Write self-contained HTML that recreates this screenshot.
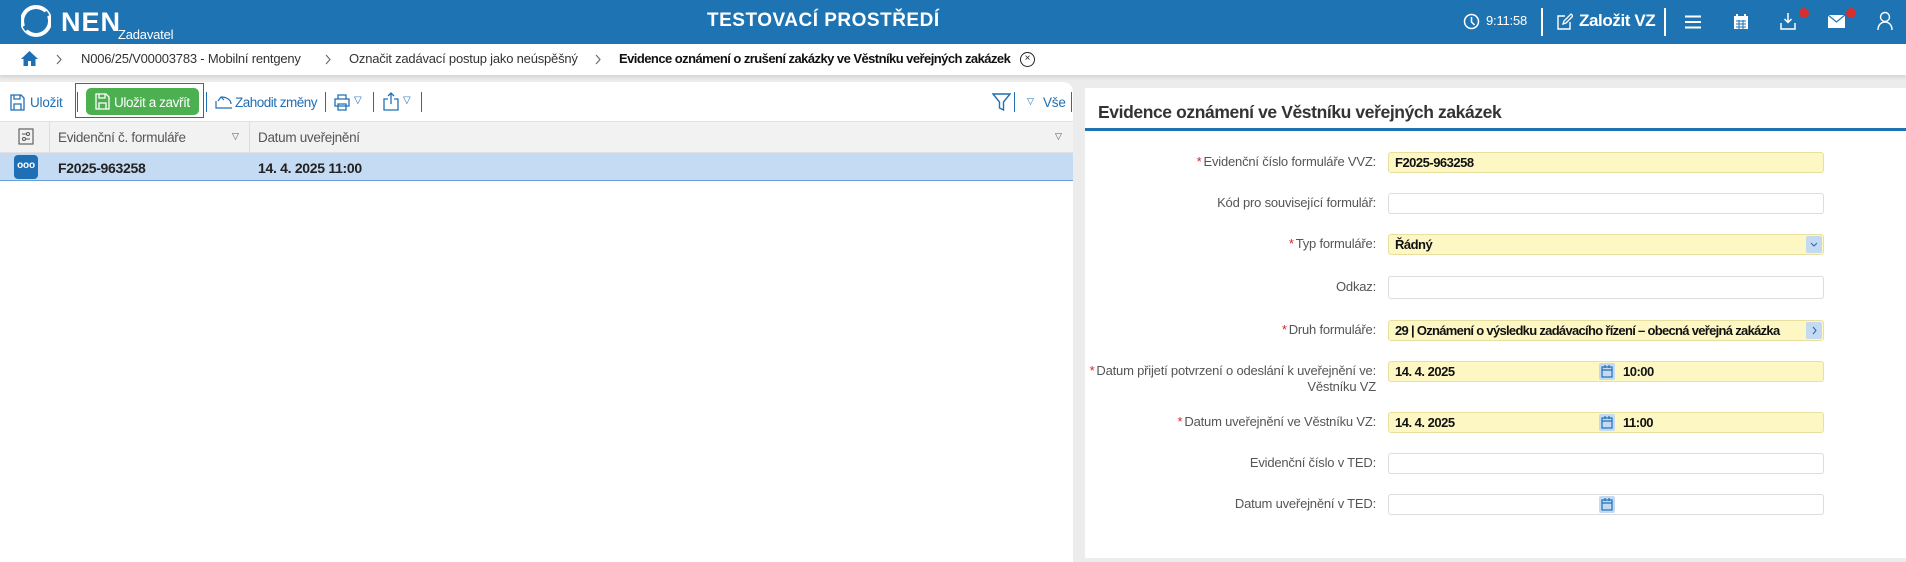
<!DOCTYPE html>
<html><head><meta charset="utf-8"><style>
*{box-sizing:border-box;margin:0;padding:0}
body{width:1906px;height:554px;overflow:hidden;background:#ececec;font-family:"Liberation Sans",sans-serif;font-size:13px;color:#222;position:relative;letter-spacing:-0.2px}
.abs{position:absolute}
#hdr{left:0;top:0;width:1906px;height:44px;background:#1e74b3;color:#fff}
#bc{left:0;top:44px;width:1906px;height:31px;background:#fff;box-shadow:0 2px 4px rgba(0,0,0,.12)}
#lp{left:0;top:82px;width:1073px;height:480px;background:#fff;border-top-right-radius:10px}
#rp{left:1085px;top:88px;width:821px;height:470px;background:#fff}
.blue{color:#1f6fb5}
.sep{position:absolute;width:1px;height:20px;background:#1f6fb5;top:92px}
.lbl{position:absolute;right:530px;text-align:right;color:#555;font-size:13px;line-height:16px}
.lbl b{color:#d22;font-weight:normal;margin-right:2px}
.inp{position:absolute;left:1388px;width:436px;height:21px;border:1px solid #ddd;border-radius:3px;background:#fff;font-weight:bold;font-size:13px;line-height:19px;padding-left:6px;color:#111;letter-spacing:-0.5px;overflow:hidden;white-space:nowrap}
.inp.y{background:#fdf7c3;border-color:#e8e0a0}
.cal{position:absolute;left:210px;top:1px;width:16px;height:17px;background:#c5daf2;border-radius:2px}
</style></head><body>
<div id="hdr" class="abs">
 <svg class="abs" style="left:21px;top:5px" width="30" height="32" viewBox="0 0 30 32"><path d="M15 2a14 14 0 1 0 0.1 0" fill="none" stroke="#fff" stroke-width="4"/><path d="M3 24 L27 8" stroke="#1e74b3" stroke-width="5"/></svg>
 <div class="abs" style="left:61px;top:7px;font-size:27px;font-weight:bold;letter-spacing:1px">NEN</div>
 <div class="abs" style="left:118px;top:27px;font-size:13px">Zadavatel</div>
 <div class="abs" style="left:707px;top:10px;font-size:19px;font-weight:bold;letter-spacing:0.5px">TESTOVACÍ PROSTŘEDÍ</div>
 <svg class="abs" style="left:1463px;top:13px" width="17" height="17" viewBox="0 0 17 17"><circle cx="8.5" cy="8.5" r="7" fill="none" stroke="#fff" stroke-width="1.5"/><path d="M8.5 4v5l3 3" fill="none" stroke="#fff" stroke-width="1.5"/></svg>
 <div class="abs" style="left:1486px;top:13px;font-size:13px">9:11:58</div>
 <div class="abs" style="left:1541px;top:8px;width:2px;height:28px;background:#fff"></div>
 <svg class="abs" style="left:1556px;top:13px" width="17" height="18" viewBox="0 0 17 18"><path d="M9 3H2v13h12V9" fill="none" stroke="#fff" stroke-width="1.4"/><path d="M7 11l1-3 7-7 2 2-7 7z" fill="none" stroke="#fff" stroke-width="1.3"/></svg>
 <div class="abs" style="left:1579px;top:11px;font-size:17px;font-weight:bold;letter-spacing:-0.4px">Založit VZ</div>
 <div class="abs" style="left:1664px;top:8px;width:2px;height:28px;background:#fff"></div>
 <svg class="abs" style="left:1685px;top:15px" width="16" height="14"><path d="M0 1.5h16M0 7h16M0 12.5h16" stroke="#fff" stroke-width="2"/></svg>
 <svg class="abs" style="left:1733px;top:13px" width="16" height="17" viewBox="0 0 16 17"><rect x="1" y="3" width="14" height="13" fill="#fff"/><path d="M4 1v4M12 1v4" stroke="#fff" stroke-width="2"/><path d="M3 8h10M3 11h10M3 14h10M6 7v9M10 7v9" stroke="#1e74b3" stroke-width="1"/></svg>
 <svg class="abs" style="left:1780px;top:12px" width="16" height="18" viewBox="0 0 16 18"><path d="M8 1v9M4.5 7l3.5 3.5L11.5 7" fill="none" stroke="#fff" stroke-width="1.5"/><path d="M1 11v6h14v-6" fill="none" stroke="#fff" stroke-width="1.5"/></svg>
 <div class="abs" style="left:1799px;top:8px;width:10px;height:10px;border-radius:50%;background:#d32f2f"></div>
 <svg class="abs" style="left:1828px;top:15px" width="17" height="13" viewBox="0 0 17 13"><rect width="17" height="13" fill="#fff"/><path d="M0 0l8.5 7L17 0" fill="none" stroke="#1e74b3" stroke-width="1.2"/></svg>
 <div class="abs" style="left:1846px;top:8px;width:10px;height:10px;border-radius:50%;background:#d32f2f"></div>
 <svg class="abs" style="left:1877px;top:11px" width="16" height="20" viewBox="0 0 16 20"><circle cx="8" cy="6" r="4.5" fill="none" stroke="#fff" stroke-width="1.4"/><path d="M1 19c0-5 3-8 7-8s7 3 7 8" fill="none" stroke="#fff" stroke-width="1.4"/></svg>
</div>
<div id="bc" class="abs">
 <svg class="abs" style="left:21px;top:7px" width="17" height="15" viewBox="0 0 17 15"><path d="M8.5 0L0 8h2.5v7h4.5v-5h3v5h4.5V8H17z" fill="#1f6fb5"/></svg>
 <svg class="abs" style="left:56px;top:10px" width="6" height="11"><path d="M1 1l4 4.5L1 10" fill="none" stroke="#666" stroke-width="1.1"/></svg>
 <div class="abs" style="left:81px;top:7px;color:#333">N006/25/V00003783 - Mobilní rentgeny</div>
 <svg class="abs" style="left:325px;top:10px" width="6" height="11"><path d="M1 1l4 4.5L1 10" fill="none" stroke="#666" stroke-width="1.1"/></svg>
 <div class="abs" style="left:349px;top:7px;color:#333">Označit zadávací postup jako neúspěšný</div>
 <svg class="abs" style="left:595px;top:10px" width="6" height="11"><path d="M1 1l4 4.5L1 10" fill="none" stroke="#666" stroke-width="1.1"/></svg>
 <div class="abs" style="left:619px;top:7px;color:#111;font-weight:bold;letter-spacing:-0.55px">Evidence oznámení o zrušení zakázky ve Věstníku veřejných zakázek</div>
 <div class="abs" style="left:1020px;top:8px;width:15px;height:15px;border:1.3px solid #222;border-radius:50%;font-size:10px;line-height:12px;text-align:center">×</div>
</div>
<div id="lp" class="abs"></div>
<div id="rp" class="abs"></div>
<!-- toolbar -->
<svg class="abs" style="left:10px;top:94px" width="15" height="17" viewBox="0 0 15 17"><path d="M1 1h10l3 3v12H1z M4 1v4h6V1 M4 16v-6h7v6" fill="none" stroke="#1f6fb5" stroke-width="1.3"/></svg>
<div class="abs blue" style="left:30px;top:95px;font-size:13.5px">Uložit</div>
<div class="sep" style="left:77px"></div>
<div class="abs" style="left:75px;top:83px;width:129px;height:35px;border:1px solid #e0262b"></div>
<div class="abs" style="left:86px;top:88px;width:113px;height:27px;background:#4caf50;border-radius:5px"></div>
<svg class="abs" style="left:95px;top:93px" width="15" height="17" viewBox="0 0 15 17"><path d="M1 1h10l3 3v12H1z M4 1v4h6V1 M4 16v-6h7v6" fill="none" stroke="#fff" stroke-width="1.3"/></svg>
<div class="abs" style="left:114px;top:95px;font-size:13.5px;color:#fff;letter-spacing:-0.4px">Uložit a zavřít</div>
<div class="sep" style="left:206px"></div>
<svg class="abs" style="left:215px;top:95px" width="18" height="14" viewBox="0 0 18 14"><path d="M3 6l3-4 3 3M6 2c6 0 10 3 10 7M1 6v7h16" fill="none" stroke="#1f6fb5" stroke-width="1.2"/></svg>
<div class="abs blue" style="left:235px;top:95px;font-size:13.5px;letter-spacing:-0.5px">Zahodit změny</div>
<div class="sep" style="left:325px"></div>
<svg class="abs" style="left:334px;top:94px" width="16" height="17" viewBox="0 0 16 17"><path d="M4 5V1h8v4M1 5h14v7H1zM4 10h8v6H4z" fill="none" stroke="#1f6fb5" stroke-width="1.3"/></svg>
<div class="abs blue" style="left:354px;top:95px;font-size:10px">▽</div>
<div class="sep" style="left:373px"></div>
<svg class="abs" style="left:383px;top:92px" width="16" height="19" viewBox="0 0 16 19"><path d="M5 7H1v11h14V7h-4M8 12V1M5 4l3-3 3 3" fill="none" stroke="#1f6fb5" stroke-width="1.3"/></svg>
<div class="abs blue" style="left:403px;top:95px;font-size:10px">▽</div>
<div class="sep" style="left:421px"></div>
<svg class="abs" style="left:992px;top:93px" width="19" height="18" viewBox="0 0 19 18"><path d="M1 1h17l-6.5 8v8l-4-2V9z" fill="none" stroke="#1f6fb5" stroke-width="1.4"/></svg>
<div class="sep" style="left:1014px"></div>
<div class="abs blue" style="left:1027px;top:96px;font-size:9px">▽</div>
<div class="abs blue" style="left:1043px;top:95px;font-size:13.5px">Vše</div>
<div class="sep" style="left:1071px"></div>
<!-- grid -->
<div class="abs" style="left:0;top:121px;width:1073px;height:32px;background:#f2f2f2;border-top:1px solid #e2e2e2;border-bottom:1px solid #e2e2e2"></div>
<div class="abs" style="left:49px;top:121px;width:1px;height:32px;background:#ddd"></div>
<div class="abs" style="left:249px;top:121px;width:1px;height:32px;background:#ddd"></div>
<svg class="abs" style="left:18px;top:128px" width="16" height="17" viewBox="0 0 16 17"><rect x="1" y="1" width="14" height="15" fill="none" stroke="#555" stroke-width="1.1"/><path d="M4 6h8M4 11h8" stroke="#555"/><circle cx="10" cy="6" r="1.5" fill="#fff" stroke="#555"/><circle cx="6" cy="11" r="1.5" fill="#fff" stroke="#555"/></svg>
<div class="abs" style="left:58px;top:130px;color:#555;font-size:13.5px;letter-spacing:-0.3px">Evidenční č. formuláře</div>
<div class="abs" style="left:232px;top:131px;color:#555;font-size:9px">▽</div>
<div class="abs" style="left:258px;top:130px;color:#555;font-size:13.5px;letter-spacing:-0.3px">Datum uveřejnění</div>
<div class="abs" style="left:1055px;top:131px;color:#555;font-size:9px">▽</div>
<div class="abs" style="left:0;top:153px;width:1073px;height:28px;background:#c5daf3;border-bottom:1px solid #6a9fd6"></div>
<div class="abs" style="left:14px;top:155px;width:24px;height:24px;background:#1f6fb5;border-radius:4px;color:#fff;font-size:10px;text-align:center;line-height:22px;font-weight:bold">ooo</div>
<div class="abs" style="left:58px;top:160px;font-weight:bold;font-size:14px;letter-spacing:-0.3px">F2025-963258</div>
<div class="abs" style="left:258px;top:160px;font-weight:bold;font-size:14px;letter-spacing:-0.3px">14. 4. 2025 11:00</div>
<!-- right panel -->
<div class="abs" style="left:1098px;top:102px;font-size:17.5px;font-weight:bold;color:#333;letter-spacing:-0.4px">Evidence oznámení ve Věstníku veřejných zakázek</div>
<div class="abs" style="left:1085px;top:128px;width:821px;height:3px;background:#1e74b3"></div>

<div class="lbl" style="top:154px"><b>*</b>Evidenční číslo formuláře VVZ:</div>
<div class="inp y" style="top:152px">F2025-963258</div>
<div class="lbl" style="top:195px">Kód pro související formulář:</div>
<div class="inp" style="top:193px"></div>
<div class="lbl" style="top:236px"><b>*</b>Typ formuláře:</div>
<div class="inp y" style="top:234px">Řádný<div style="position:absolute;right:1px;top:1px;width:16px;height:17px;background:#c5daf2;border-radius:2px"><svg width="16" height="17"><path d="M5 7l3 3 3-3" fill="none" stroke="#1f6fb5" stroke-width="1.1"/></svg></div></div>
<div class="lbl" style="top:279px">Odkaz:</div>
<div class="inp" style="top:276px;height:23px"></div>
<div class="lbl" style="top:322px"><b>*</b>Druh formuláře:</div>
<div class="inp y" style="top:320px;letter-spacing:-0.7px">29 | Oznámení o výsledku zadávacího řízení – obecná veřejná zakázka<div style="position:absolute;right:1px;top:1px;width:16px;height:17px;background:#c5daf2;border-radius:2px"><svg width="16" height="17"><path d="M7 5l3 3.5-3 3.5" fill="none" stroke="#1f6fb5" stroke-width="1.1"/></svg></div></div>
<div class="lbl" style="top:363px"><b>*</b>Datum přijetí potvrzení o odeslání k uveřejnění ve:<br>Věstníku VZ</div>
<div class="inp y" style="top:361px">14. 4. 2025<div class="cal"><svg width="16" height="17"><rect x="3" y="4" width="10" height="10" fill="none" stroke="#1f6fb5" stroke-width="1.2"/><path d="M3 7h10M6 2v3M10 2v3" stroke="#1f6fb5" stroke-width="1.2"/></svg></div><span style="position:absolute;left:234px">10:00</span></div>
<div class="lbl" style="top:414px"><b>*</b>Datum uveřejnění ve Věstníku VZ:</div>
<div class="inp y" style="top:412px">14. 4. 2025<div class="cal"><svg width="16" height="17"><rect x="3" y="4" width="10" height="10" fill="none" stroke="#1f6fb5" stroke-width="1.2"/><path d="M3 7h10M6 2v3M10 2v3" stroke="#1f6fb5" stroke-width="1.2"/></svg></div><span style="position:absolute;left:234px">11:00</span></div>
<div class="lbl" style="top:455px">Evidenční číslo v TED:</div>
<div class="inp" style="top:453px"></div>
<div class="lbl" style="top:496px">Datum uveřejnění v TED:</div>
<div class="inp" style="top:494px"><div class="cal"><svg width="16" height="17"><rect x="3" y="4" width="10" height="10" fill="none" stroke="#1f6fb5" stroke-width="1.2"/><path d="M3 7h10M6 2v3M10 2v3" stroke="#1f6fb5" stroke-width="1.2"/></svg></div></div>
</body></html>
